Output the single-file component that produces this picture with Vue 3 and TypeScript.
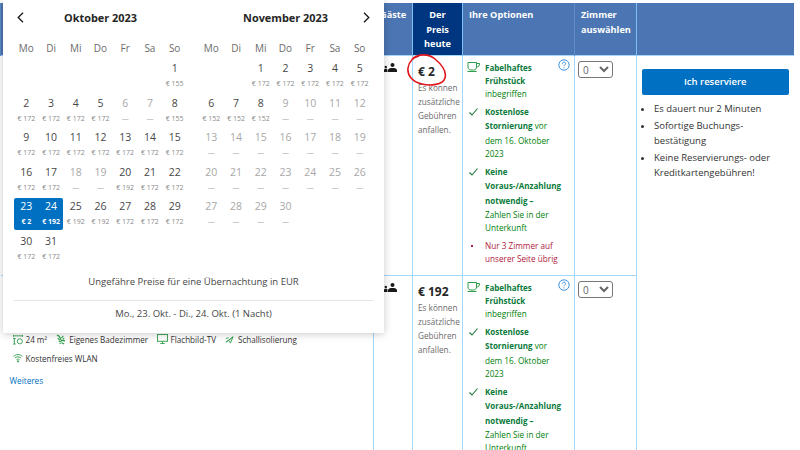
<template>
  <div class="page">
    <table class="rooms">
      <colgroup>
        <col style="width: 373px" />
        <col style="width: 39px" />
        <col style="width: 50px" />
        <col style="width: 112px" />
        <col style="width: 62px" />
        <col style="width: 157px" />
      </colgroup>
      <thead>
        <tr>
          <th></th>
          <th class="th-guests">Gäste</th>
          <th class="th-price">Der Preis heute</th>
          <th>Ihre Optionen</th>
          <th>Zimmer auswählen</th>
          <th></th>
        </tr>
      </thead>
      <tbody>
        <tr v-for="(row, i) in rows" :key="row.price">
          <td class="room-cell">
            <div v-if="i === 1" class="features">
              <span class="feature">
                <svg width="10" height="11" viewBox="0 0 11 11" fill="none" stroke="#2e9e4b" stroke-width="1">
                  <path d="M0 1.5h11M.5 .5v2M10.5 .5v2M0 4.5h3M1.5 4.5v6M0 10.5h3" />
                  <circle cx="7.5" cy="7.5" r="2.8" />
                </svg>
                24 m²
              </span>
              <span class="feature">
                <svg width="10" height="11" viewBox="0 0 11 11" fill="none" stroke="#2e9e4b" stroke-width="1.2">
                  <path d="M1 1c2 0 3 1 3.5 3l1.5 2.5 4 .5M2 4l2 2M3 7l3 1M6 9l3 1.5M8 1.5L6 4M9 4L7.5 5.5M4 9l1 1.5" />
                </svg>
                Eigenes Badezimmer
              </span>
              <span class="feature">
                <svg class="tv" width="11" height="10" viewBox="0 0 12 11" fill="none" stroke="#2e9e4b" stroke-width="1">
                  <rect x="0.5" y="0.5" width="11" height="7.5" />
                  <path d="M3.5 10.5h5M6 8v2.5" />
                </svg>
                Flachbild-TV
              </span>
              <span class="feature">
                <svg class="sound" width="9" height="9" viewBox="0 0 10 10" fill="none" stroke="#2e9e4b" stroke-width="1">
                  <path d="M1 8l8-6-3 7-2-3zM4 6l5-4M1 4l3-1" />
                </svg>
                Schallisolierung
              </span>
              <span class="feature">
                <svg width="10" height="10" viewBox="0 0 11 10" fill="none" stroke="#2e9e4b" stroke-width="1">
                  <path d="M0.5 3.2c3-2.6 7-2.6 10 0M2.2 5c2-1.7 4.6-1.7 6.6 0M3.9 6.8c1-.8 2.2-.8 3.2 0" />
                  <circle cx="5.5" cy="8.6" r="0.7" fill="#2e9e4b" />
                </svg>
                Kostenfreies WLAN
              </span>
            </div>
            <a v-if="i === 1" class="more">Weiteres</a>
          </td>
          <td class="guests-cell">
            <svg width="14" height="10" viewBox="0 0 14 10" fill="#1a1a1a">
              <circle cx="1.8" cy="4" r="1.2" />
              <path d="M0 9V7c0-.8.9-1.2 1.8-1.2S3.5 6.2 3.5 7v2z" />
              <circle cx="8.5" cy="2" r="2" />
              <path d="M4 9V7.2C4 5.6 6 5 8.5 5S13 5.6 13 7.2V9z" />
            </svg>
          </td>
          <td class="price-cell">
            <div class="price">€ {{ row.price }}</div>
            <div class="price-note">Es können zusätzliche Gebühren anfallen.</div>
          </td>
          <td class="options-cell">
            <svg class="help" width="12" height="12" viewBox="0 0 12 12" fill="none" stroke="#3f93d8">
              <circle cx="6" cy="6" r="5.2" />
              <path d="M4.4 4.7c0-2.1 3.2-2.1 3.2 0 0 1.3-1.6 1.2-1.6 2.6" />
              <path d="M6 8.4v1" />
            </svg>
            <div class="option first">
              <svg class="opt-icon" width="13" height="10" viewBox="0 0 13 10" fill="none" stroke="#2e9e4b">
                <path d="M1 .5h8.5v4.5c0 2-1.5 3-3 3h-2.5c-1.5 0-3-1-3-3z" />
                <path d="M9.5 1.5h3c0 2.5-1 3.5-3 3.5M.5 9.5h9" />
              </svg>
              <strong>Fabelhaftes<br />Frühstück</strong><br />inbegriffen
            </div>
            <div class="option">
              <svg class="opt-icon check" width="9" height="8" viewBox="0 0 9 8" fill="none" stroke="#1f7a3f" stroke-width="1.1">
                <path d="M.5 4.5L3 7 8.5 .5" />
              </svg>
              <strong>Kostenlose<br />Stornierung</strong> vor<br />dem 16. Oktober<br />2023
            </div>
            <div class="option">
              <svg class="opt-icon check" width="9" height="8" viewBox="0 0 9 8" fill="none" stroke="#1f7a3f" stroke-width="1.1">
                <path d="M.5 4.5L3 7 8.5 .5" />
              </svg>
              <strong>Keine<br />Voraus-/Anzahlung<br />notwendig –</strong><br />Zahlen Sie in der<br />Unterkunft
            </div>
            <div v-if="i === 0" class="option scarcity">
              <span class="dot"></span>
              Nur 3 Zimmer auf<br />unserer Seite übrig
            </div>
          </td>
          <td class="select-cell">
            <select class="qty">
              <option>0</option>
              <option>1</option>
            </select>
          </td>
          <td v-if="i === 0" rowspan="2" class="book-cell">
            <button class="reserve">Ich reserviere</button>
            <ul class="perks">
              <li>Es dauert nur 2 Minuten</li>
              <li>Sofortige Buchungs-<br />bestätigung</li>
              <li>Keine Reservierungs- oder Kreditkartengebühren!</li>
            </ul>
          </td>
        </tr>
      </tbody>
    </table>

    <svg class="scribble" width="44" height="38" viewBox="0 0 44 38" fill="none" stroke="#e0141c" stroke-width="1.6">
      <path d="M8 8C14 3 24 2 31 8C37 13 43 20 41 27C39 34 26 35 18 33C9 31 3 25 4 17C5 10 10 6 15 5" />
    </svg>

    <div class="datepicker">
      <div class="months">
        <section v-for="(m, mi) in months" :key="m.title" class="month">
          <header class="month-head">
            <svg v-if="mi === 0" class="nav" width="7" height="11" viewBox="0 0 7 11" fill="none" stroke="#1a1a1a" stroke-width="1.3">
              <path d="M6 .7L1.2 5.5 6 10.3" />
            </svg>
            <span class="month-title">{{ m.title }}</span>
            <svg v-if="mi === 1" class="nav nav-next" width="7" height="11" viewBox="0 0 7 11" fill="none" stroke="#1a1a1a" stroke-width="1.3">
              <path d="M1 .7L5.8 5.5 1 10.3" />
            </svg>
          </header>
          <div class="weekdays">
            <span v-for="w in weekdays" :key="w">{{ w }}</span>
          </div>
          <div class="days">
            <div
              v-for="day in m.days"
              :key="day.d"
              class="day"
              :class="{ muted: !day.p, sel: day.sel, 'sel-start': day.d === 23 && day.sel, 'sel-end': day.d === 24 && day.sel }"
              :style="day.d === 1 ? { gridColumnStart: m.offset + 1 } : undefined"
            >
              <span class="num">{{ day.d }}</span>
              <span class="cost">{{ day.p ? `€ ${day.p}` : '—' }}</span>
            </div>
          </div>
        </section>
      </div>
      <p class="approx">Ungefähre Preise für eine Übernachtung in EUR</p>
      <p class="range">Mo., 23. Okt. - Di., 24. Okt. (1 Nacht)</p>
    </div>
  </div>
</template>

<script setup lang="ts">
interface Day {
  d: number
  p: number | null
  sel?: boolean
}

const weekdays = ['Mo', 'Di', 'Mi', 'Do', 'Fr', 'Sa', 'So']

const rows = [{ price: '2' }, { price: '192' }]

const octPrices: (number | null)[] = [
  155, 172, 172, 172, 172, null, null, 155, 172, 172, 172, 172, 172, 172, 172, 172, 172, null, null, 192,
  172, 172, 2, 192, 192, 192, 172, 172, 172, 172, 172
]

const octDays: Day[] = octPrices.map((p, i) => ({ d: i + 1, p, sel: i === 22 || i === 23 }))

const novDays: Day[] = Array.from({ length: 30 }, (_, i) => {
  const d = i + 1
  if (d <= 5) return { d, p: 172 }
  if (d <= 8) return { d, p: 152 }
  return { d, p: null }
})

const months = [
  { title: 'Oktober 2023', offset: 6, days: octDays },
  { title: 'November 2023', offset: 2, days: novDays }
]
</script>

<style>
body {
  background: #fff;
}
</style>

<style scoped>
.page {
  position: relative;
  width: 800px;
  height: 450px;
  overflow: hidden;
  background: #fff;
  font-family: "Open Sans", "Liberation Sans", sans-serif;
  font-size: 9.5px;
  color: #333;
}

.rooms {
  margin-top: 3px;
  width: 793px;
  table-layout: fixed;
  border-collapse: collapse;
}

.rooms th {
  box-sizing: border-box;
  height: 52px;
  padding: 5px 6px 3px;
  background: #4c76b3;
  color: #fff;
  font-size: 9.2px;
  font-weight: 700;
  line-height: 14.5px;
  text-align: left;
  vertical-align: top;
  border-left: 1px solid #5d8dc6;
}

.rooms th:last-child {
  border-left: 1px solid #7cc0f5;
}

.rooms .th-price {
  background: #003580;
  text-align: center;
  border-left: 1px solid #7cc0f5;
  border-right: 1px solid #7cc0f5;
}

.rooms td {
  box-sizing: border-box;
  height: 220px;
  padding: 0;
  vertical-align: top;
  border: 1px solid #a3d7fc;
}

.rooms .room-cell {
  padding: 58px 0 0 9px;
  border-left: none;
}

.features {
  display: flex;
  flex-wrap: wrap;
  gap: 8px 9px;
  margin-left: 3px;
  line-height: 11px;
}

.feature {
  display: flex;
  align-items: center;
  gap: 3px;
  white-space: nowrap;
  font-size: 8.1px;
}

.feature .tv {
  margin-right: -0.5px;
}

.feature .sound {
  margin-right: 1px;
}

.more {
  display: block;
  margin-top: 11px;
  color: #0071c2;
  font-size: 8.2px;
}

.rooms .guests-cell {
  padding: 7px 0 0 10px;
}

.rooms .price-cell {
  padding: 9px 2px 0 5px;
}

.price {
  font-size: 12px;
  font-weight: 700;
  line-height: 14px;
  color: #262626;
}

.price-note {
  margin-top: 2px;
  font-size: 8.2px;
  line-height: 14.3px;
  color: #6b6b6b;
}

.rooms .options-cell {
  position: relative;
  padding: 5px 4px 0 22px;
  font-size: 8.2px;
  line-height: 13px;
  color: #008009;
}

.help {
  position: absolute;
  top: 3px;
  right: 4px;
}

.option {
  position: relative;
  margin-bottom: 5px;
}

.option strong {
  font-size: 8px;
  line-height: 14.5px;
  color: #0a7a3a;
}

.option.first strong {
  line-height: 13px;
}

.opt-icon {
  position: absolute;
  left: -18px;
  top: 1px;
}

.opt-icon.check {
  left: -16px;
  top: 3px;
}

.scarcity {
  color: #b0213d;
}

.dot {
  position: absolute;
  left: -14px;
  top: 6px;
  width: 2px;
  height: 2px;
  background: #b0213d;
}

.rooms .select-cell {
  padding: 5px 0 0 3px;
}

.qty {
  display: block;
  width: 35px;
  height: 17px;
  font-family: inherit;
  font-size: 10px;
  color: #666;
  background: #fff;
  border: 1px solid #767676;
  border-radius: 3px;
}

.rooms .book-cell {
  padding: 13px 5px 0 5px;
  border-right: none;
  border-bottom: none;
}

.reserve {
  display: block;
  width: 100%;
  height: 26px;
  border: none;
  border-radius: 2px;
  background: #0071c2;
  color: #fff;
  font-family: inherit;
  font-size: 9.5px;
  font-weight: 600;
}

.perks {
  margin: 7px 0 0;
  padding: 0 0 0 12px;
  font-size: 9.5px;
  line-height: 14.5px;
  color: #333;
}

.perks li {
  margin-bottom: 3px;
}

.scribble {
  position: absolute;
  left: 404px;
  top: 51px;
}

.datepicker {
  position: absolute;
  left: 3px;
  top: 0;
  width: 381px;
  height: 333px;
  padding: 0 11px;
  box-sizing: border-box;
  background: #fff;
  box-shadow: 0 1px 8px rgba(0, 0, 0, 0.22);
}

.months {
  display: flex;
  gap: 12px;
  height: 271px;
}

.month {
  width: 173px;
}

.month-head {
  position: relative;
  display: flex;
  justify-content: center;
  align-items: center;
  box-sizing: border-box;
  height: 36px;
  padding-bottom: 2px;
}

.month-title {
  font-size: 10.9px;
  font-weight: 700;
  color: #262626;
}

.nav {
  position: absolute;
  left: 3px;
  top: 12px;
}

.nav-next {
  left: auto;
  right: 2px;
}

.weekdays {
  display: grid;
  grid-template-columns: repeat(7, 1fr);
  height: 24px;
  align-items: center;
  font-size: 10px;
  text-align: center;
  color: #6b6b6b;
}

.days {
  display: grid;
  grid-template-columns: repeat(7, 1fr);
  grid-auto-rows: 34.5px;
}

.day {
  display: flex;
  flex-direction: column;
  align-items: center;
  height: 32px;
  color: #474747;
}

.num {
  font-size: 10.5px;
  line-height: 17px;
}

.cost {
  font-size: 7px;
  line-height: 13px;
  color: #8a8a8a;
}

.day.muted .num,
.day.muted .cost {
  color: #a8a8a8;
}

.day.sel {
  background: #0071c2;
  color: #fff;
}

.day.sel .cost {
  color: #fff;
  font-weight: 700;
}

.sel-start {
  border-radius: 2px 0 0 2px;
}

.sel-end {
  border-radius: 0 2px 2px 0;
}

.approx {
  margin: 0;
  height: 29px;
  line-height: 21px;
  font-size: 9.5px;
  text-align: center;
  color: #474747;
  border-bottom: 1px solid #e6e6e6;
}

.range {
  margin: 0;
  line-height: 26px;
  font-size: 9.5px;
  text-align: center;
  color: #474747;
}
</style>
